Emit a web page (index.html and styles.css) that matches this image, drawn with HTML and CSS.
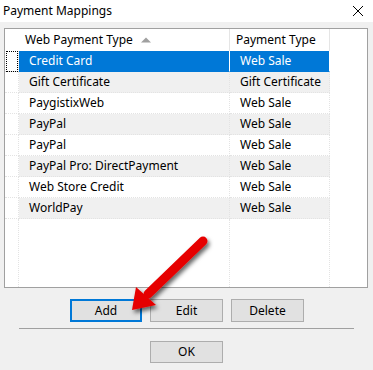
FILE: index.html
```
<!DOCTYPE html>
<html>
<head>
<meta charset="utf-8">
<link rel="stylesheet" href="styles.css">
</head>
<body>
<div class="dialog">
  <div class="titlebar">
    <span class="title">Payment Mappings</span>
    <svg class="close" width="12" height="12" viewBox="0 0 12 12"><path d="M1 1L11 11M11 1L1 11" stroke="#000" stroke-width="1" fill="none"/></svg>
  </div>
  <div class="content">
    <div class="list">
      <div class="row header">
        <div class="rh"></div>
        <div class="c1">Web Payment Type<svg class="sort" width="10" height="6" viewBox="0 0 10 6"><path d="M0 5.5L5 0.5L10 5.5Z" fill="#a0a0a0"/></svg></div>
        <div class="c2">Payment Type</div>
      </div>
      <div class="row sel"><div class="rh"><span class="focus"></span></div><div class="c1">Credit Card</div><div class="c2">Web Sale</div></div>
      <div class="row alt"><div class="rh"></div><div class="c1">Gift Certificate</div><div class="c2">Gift Certificate</div></div>
      <div class="row"><div class="rh"></div><div class="c1">PaygistixWeb</div><div class="c2">Web Sale</div></div>
      <div class="row alt"><div class="rh"></div><div class="c1">PayPal</div><div class="c2">Web Sale</div></div>
      <div class="row"><div class="rh"></div><div class="c1">PayPal</div><div class="c2">Web Sale</div></div>
      <div class="row alt"><div class="rh"></div><div class="c1">PayPal Pro: DirectPayment</div><div class="c2">Web Sale</div></div>
      <div class="row"><div class="rh"></div><div class="c1">Web Store Credit</div><div class="c2">Web Sale</div></div>
      <div class="row alt"><div class="rh"></div><div class="c1">WorldPay</div><div class="c2">Web Sale</div></div>
      <div class="row filler"><div class="rh"></div><div class="c1"></div><div class="c2"></div></div>
    </div>
    <div class="buttons">
      <button class="btn default">Add</button>
      <button class="btn">Edit</button>
      <button class="btn">Delete</button>
    </div>
    <div class="sep"></div>
    <div class="okrow">
      <button class="btn">OK</button>
    </div>
  </div>
  <svg class="arrow" width="373" height="370" viewBox="0 0 373 370">
    <defs>
      <filter id="sh" x="-30%" y="-30%" width="160%" height="160%">
        <feDropShadow dx="2" dy="3" stdDeviation="2" flood-color="#000" flood-opacity="0.6"/>
      </filter>
      <linearGradient id="rg" x1="0" y1="0" x2="1" y2="1">
        <stop offset="0" stop-color="#ff3a3a"/>
        <stop offset="1" stop-color="#d80000"/>
      </linearGradient>
    </defs>
    <g filter="url(#sh)">
      <line x1="203" y1="241" x2="148" y2="294" stroke="#e60000" stroke-width="9" stroke-linecap="round"/>
      <polygon points="132,310 136,287 156,305" fill="#e60000"/>
    </g>
  </svg>
</div>
</body>
</html>
```
FILE: styles.css
```
html, body {
  margin: 0;
  padding: 0;
}
body {
  background: #f0f0f0;
  font-family: "Noto Sans", "Open Sans", sans-serif;
  font-size: 12px;
  color: #000;
  width: 373px;
  height: 370px;
  overflow: hidden;
}
.dialog {
  position: relative;
  width: 373px;
  height: 370px;
}
.titlebar {
  height: 22px;
  background: #fff;
  display: flex;
  align-items: center;
  justify-content: space-between;
  padding: 0 9px 0 3px;
  box-sizing: border-box;
}
.title {
  font-size: 12px;
  line-height: 20px;
}
.close {
  display: block;
  margin-top: -1px;
}
.content {
  padding: 6px 0 0 4px;
}
.list {
  width: 364px;
  height: 260px;
  box-sizing: border-box;
  border: 1px solid #a0a0a0;
  background: #fff;
  display: flex;
  flex-direction: column;
}
.row {
  display: flex;
  height: 21px;
  flex: none;
}
.row > div {
  box-sizing: border-box;
  border-right: 1px dotted #e3e3e3;
  border-bottom: 1px dotted #e3e3e3;
  line-height: 20px;
  white-space: nowrap;
}
.rh {
  width: 14px;
  position: relative;
}
.c1 {
  width: 211px;
  padding-left: 10px;
}
.c2 {
  width: 100px;
  padding-left: 10px;
}
.row.header {
  height: 22px;
}
.row.header > div {
  border-bottom: none;
  border-right: 1px solid #e5e5e5;
  line-height: 22px;
}
.row.header .rh {
  border-right: none;
}
.row.header .c1 {
  padding-left: 6px;
}
.row.header .c2 {
  padding-left: 6px;
}
.sort {
  margin-left: 8px;
  vertical-align: 1px;
}
.row.sel .c1,
.row.sel .c2 {
  background: #0078d7;
  color: #fff;
  border-right: 1px solid #fff;
  border-bottom-color: #0078d7;
}
.focus {
  position: absolute;
  left: 1px;
  top: 0;
  width: 12px;
  height: 21px;
  box-sizing: border-box;
  border: 1px dotted #000;
}
.row.alt .c1,
.row.alt .c2 {
  background: #f0f0f0;
}
.row.filler {
  flex: 1;
  height: auto;
}
.row.filler > div {
  border-bottom: none;
}
.buttons {
  display: flex;
  gap: 8px;
  padding-left: 66px;
  margin-top: 11px;
}
.btn {
  font-family: "Noto Sans", "Open Sans", sans-serif;
  font-size: 12px;
  color: #000;
  width: 73px;
  height: 23px;
  padding: 0;
  margin: 0;
  background: #e1e1e1;
  border: 1px solid #adadad;
  box-sizing: border-box;
  line-height: 20px;
}
.btn.default {
  width: 72px;
  border: 2px solid #0078d7;
}
.sep {
  margin: 6px 0 0 15px;
  width: 335px;
  height: 0;
  border-top: 1px solid #a0a0a0;
}
.okrow {
  padding-left: 146px;
  margin-top: 12px;
}
.okrow .btn {
  height: 22px;
}
.arrow {
  position: absolute;
  left: 0;
  top: 0;
  pointer-events: none;
}
```
